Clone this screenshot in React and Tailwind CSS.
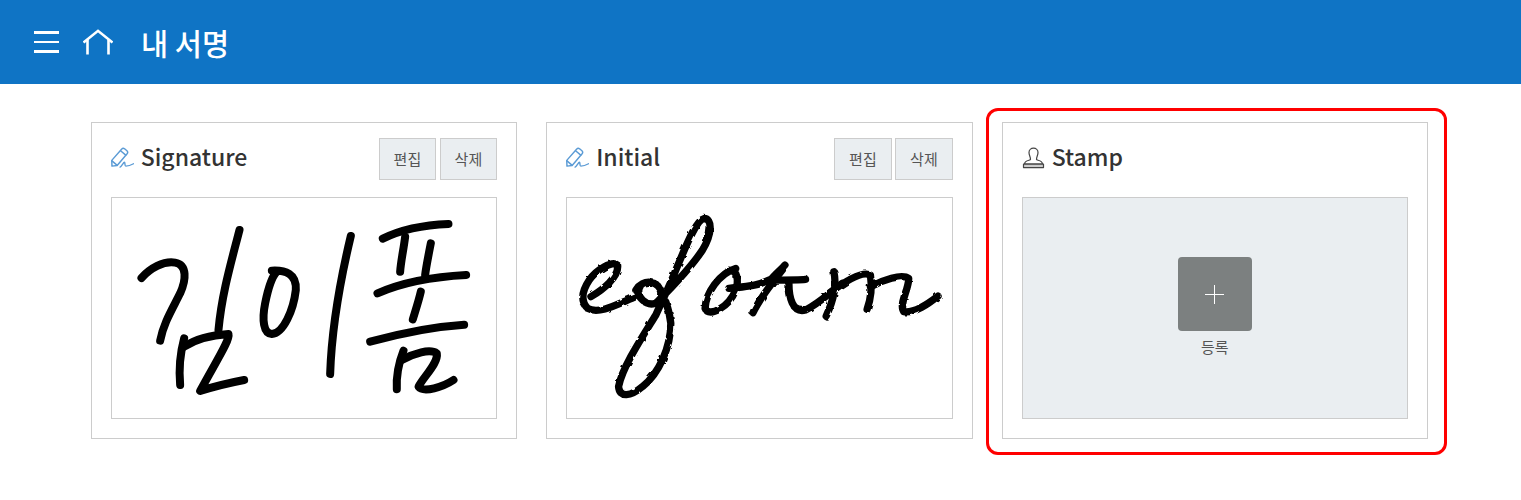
import React from 'react';

const FONT = '"Noto Sans CJK KR", "Noto Sans", sans-serif';

const PenIcon = () => (
  <svg width="23" height="22" viewBox="0 0 24 22" fill="none" stroke="#5b9bd5" strokeWidth="1.5" strokeLinejoin="round" strokeLinecap="round">
    <path d="M1 19.5 L0.8 13.5 L11 1.8 C12 0.8 13 0.6 14.2 1.4 L16.6 3.4 C17.6 4.4 17.6 5.6 16.8 6.6 L6.4 18.8 Z" />
    <path d="M10 3.4 L15.4 8" />
    <path d="M1 14 L6.2 18.4" />
    <path d="M9.5 20.5 C11 20 13 15.5 14 15.5 C15 15.5 14 19.5 15.5 19.5 C17 19.5 20 19 23.5 17" />
  </svg>
);

const StampIcon = () => (
  <svg width="23" height="22" viewBox="0 0 22 22" fill="none" stroke="#444" strokeWidth="1.2" strokeLinejoin="round">
    <path d="M8 12.5 C8 9.5 6.5 8.5 6.5 5.5 C6.5 3 8.5 1.2 11 1.2 C13.5 1.2 15.5 3 15.5 5.5 C15.5 8.5 14 9.5 14 12.5 C14 13.5 20 13 20 17 L2 17 C2 13 8 13.5 8 12.5 Z" />
    <rect x="1" y="17.2" width="20" height="3.4" fill="#ccc" />
  </svg>
);

const SignatureDrawing = () => (
  <svg className="block w-full h-full" viewBox="36 24 1152 660" fill="none" stroke="#000" strokeWidth="24" strokeLinecap="round" strokeLinejoin="round">
    <path d="M124 264 C150 235 190 212 225 218 C262 225 258 270 240 310 C215 360 190 400 180 452" />
    <path d="M418 120 C395 210 365 310 355 420" />
    <path d="M252 445 C240 490 236 540 240 585" />
    <path d="M252 470 C290 445 340 435 385 432 C390 450 350 510 300 603 C340 590 390 578 432 570" />
    <path d="M515 242 C555 240 590 250 587 300 C580 360 550 430 515 432 C490 430 485 390 495 340 C505 290 515 260 530 245" />
    <path d="M752 138 C730 230 695 400 690 552" />
    <path d="M848 146 C900 120 970 105 1045 102" />
    <path d="M915 140 C910 180 902 215 900 245" />
    <path d="M992 160 C985 195 978 230 975 255" />
    <path d="M832 310 C900 280 1000 260 1098 255" />
    <path d="M962 305 C955 335 945 365 938 388" />
    <path d="M810 455 C900 430 1000 410 1092 404" />
    <path d="M910 482 C895 520 888 560 890 598" />
    <path d="M905 510 C940 490 990 475 1010 490 C1015 520 970 560 955 590 C970 610 1030 590 1060 570" />
  </svg>
);

const InitialDrawing = () => (
  <svg className="block w-full h-full" viewBox="33 24 1155 660" fill="none" stroke="#000" strokeWidth="22" strokeLinecap="round" strokeLinejoin="round">
    <defs>
      <filter id="rough" x="-5%" y="-5%" width="110%" height="110%">
        <feTurbulence type="fractalNoise" baseFrequency="0.05" numOctaves="2" seed="4" />
        <feDisplacementMap in="SourceGraphic" scale="9" />
      </filter>
    </defs>
    <g filter="url(#rough)">
      <path d="M105 320 C140 300 190 260 185 225 C170 210 120 240 100 270 C80 300 70 330 95 355 C130 375 190 340 240 320" />
      <path d="M240 300 C260 265 310 270 318 310 C320 345 280 350 260 330 C245 315 245 300 255 285" />
      <path d="M300 340 C340 300 400 240 440 180 C470 130 470 85 445 85 C420 90 390 170 360 240 C340 290 320 330 300 375 C260 440 200 530 188 590 C190 625 225 620 260 590 C310 550 345 470 345 400 C342 370 335 350 330 335" />
      <path d="M540 235 C490 250 450 310 448 355 C460 385 520 350 540 300 C550 270 545 240 520 240" />
      <path d="M520 295 C560 290 600 290 640 270" />
      <path d="M640 275 C660 250 680 235 688 225" />
      <path d="M680 240 C640 290 610 330 592 368" />
      <path d="M660 270 C700 270 730 270 750 268" />
      <path d="M700 280 C700 320 710 370 750 360 C790 340 820 310 860 280" />
      <path d="M835 245 C845 290 830 340 812 378" />
      <path d="M820 310 C860 280 920 240 945 255 C950 290 945 330 935 358" />
      <path d="M945 290 C980 270 1040 250 1060 265 C1060 300 1030 340 1045 365 C1080 370 1120 340 1148 318" />
    </g>
  </svg>
);

const SmallButton = ({ children }) => (
  <button className="w-[57.3px] h-[42px] bg-[#eaeef1] border border-[#ccc] text-[15px] text-[#555] flex items-center justify-center">
    {children}
  </button>
);

const Card = ({ icon, title, actions, children }) => (
  <div className="w-[426.3px] h-[317px] border border-[#ccc] bg-white px-[19px] pt-[15px]">
    <div className="flex items-center justify-between h-[42px] mb-[17px]">
      <div className="flex items-center gap-[7px] text-[23px] leading-[30px] font-medium text-[#333] -mt-[2px]">
        {icon}
        <span className="-mt-[5px]">{title}</span>
      </div>
      {actions && (
        <div className="flex gap-[3.7px]">
          <SmallButton>편집</SmallButton>
          <SmallButton>삭제</SmallButton>
        </div>
      )}
    </div>
    {children}
  </div>
);

export default function App() {
  return (
    <div className="bg-white min-h-[500px]" style={{ fontFamily: FONT }}>
      <header className="h-[84px] bg-[#0f74c5] flex items-center pl-[34px] text-white">
        <div className="flex flex-col gap-[7px] w-[25px]">
          <div className="h-[2.5px] bg-white" />
          <div className="h-[2.5px] bg-white" />
          <div className="h-[2.5px] bg-white" />
        </div>
        <svg className="ml-[24px]" width="30" height="26" viewBox="0 0 30 26" fill="none" stroke="#fff" strokeWidth="2.6">
          <path d="M0.5 13.5 L15 1.8 L29.5 13.5" />
          <path d="M4.5 10.5 V25.5 M25.5 10.5 V25.5" />
        </svg>
        <h1 className="ml-[28px] text-[29.5px] font-medium">내 서명</h1>
      </header>
      <main className="flex gap-[29.2px] pl-[90.75px] pt-[38px]">
        <Card icon={<PenIcon />} title="Signature" actions>
          <div className="h-[222px] border border-[#ccc]">
            <SignatureDrawing />
          </div>
        </Card>
        <Card icon={<PenIcon />} title="Initial" actions>
          <div className="h-[222px] border border-[#ccc]">
            <InitialDrawing />
          </div>
        </Card>
        <div className="relative">
          <div className="absolute left-[-16px] right-[-19px] top-[-14px] bottom-[-16px] border-[3px] border-[#f00] rounded-[12px]" />
          <Card icon={<StampIcon />} title="Stamp">
            <div className="h-[222px] border border-[#ccc] bg-[#eaeef1] flex flex-col items-center pt-[59px]">
              <button className="w-[74px] h-[74px] rounded-[4px] bg-[#7c8080] flex items-center justify-center">
                <svg width="19" height="19" viewBox="0 0 19 19" stroke="#fff" strokeWidth="1">
                  <path d="M0 9.5 H19 M9.5 0 V19" />
                </svg>
              </button>
              <span className="mt-[5px] text-[15px] text-[#555]">등록</span>
            </div>
          </Card>
        </div>
      </main>
    </div>
  );
}
